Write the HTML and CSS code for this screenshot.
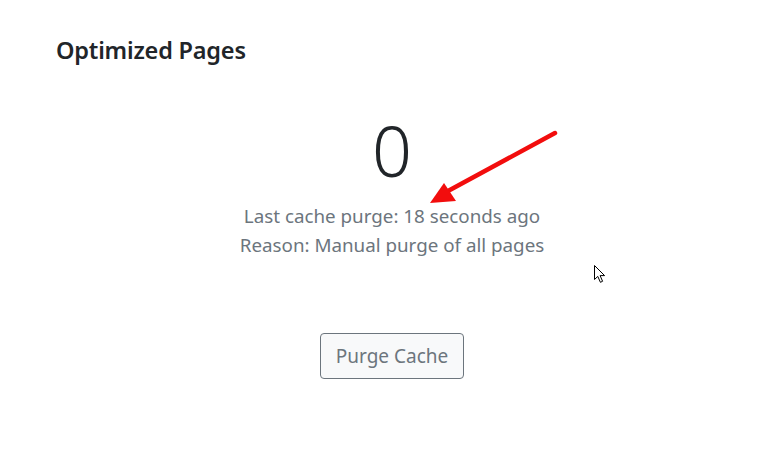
FILE: index.html
```html
<!DOCTYPE html>
<html>
<head>
<meta charset="utf-8">
<link rel="stylesheet" href="styles.css">
</head>
<body>
<div class="card">
  <h2 class="title">Optimized Pages</h2>
  <div class="stats">
    <div class="count">0</div>
    <p class="meta first">Last cache purge: 18 seconds ago</p>
    <p class="meta">Reason: Manual purge of all pages</p>
    <button class="btn">Purge Cache</button>
  </div>
</div>
<svg class="arrow" width="140" height="80" viewBox="0 0 140 80">
  <line x1="133" y1="5" x2="26" y2="63" stroke="#f20d0d" stroke-width="4.5" stroke-linecap="round"/>
  <polygon points="8,75 22,55 34,73" fill="#f20d0d"/>
</svg>
<svg class="cursor" width="14" height="20" viewBox="0 0 14 20">
  <path d="M1.5 1.5 L1.5 15.5 L4.8 12.4 L7.4 18.3 L9.6 17.3 L7.1 11.6 L11.6 11.6 Z" fill="#fff" stroke="#000" stroke-width="1" stroke-linejoin="miter"/>
</svg>
</body>
</html>
```
FILE: styles.css
```css
html, body {
  margin: 0;
  padding: 0;
  background: #fff;
}
body {
  font-family: "Noto Sans", "Open Sans", sans-serif;
  color: #212529;
  width: 777px;
  height: 450px;
  position: relative;
  overflow: hidden;
}
.card {
  padding: 34px 0 0 56px;
  width: 672px;
}
.title {
  margin: 0;
  font-size: 23.5px;
  font-weight: 600;
  line-height: 32px;
  letter-spacing: -0.2px;
}
.stats {
  display: flex;
  flex-direction: column;
  align-items: center;
  margin-top: 39px;
}
.count {
  font-size: 70px;
  line-height: 90px;
  font-weight: 300;
}
.meta {
  margin: 0;
  font-size: 18.8px;
  line-height: 29px;
  color: #6c757d;
}
.meta.first {
  margin-top: 7px;
}
.btn {
  margin-top: 73px;
  font-family: inherit;
  font-size: 19px;
  color: #6c757d;
  background: #f8f9fa;
  border: 1px solid #6c757d;
  border-radius: 4px;
  padding: 7px 15px;
  line-height: 30px;
}
.arrow {
  position: absolute;
  left: 422px;
  top: 128px;
}
.cursor {
  position: absolute;
  left: 593px;
  top: 264px;
}
```
